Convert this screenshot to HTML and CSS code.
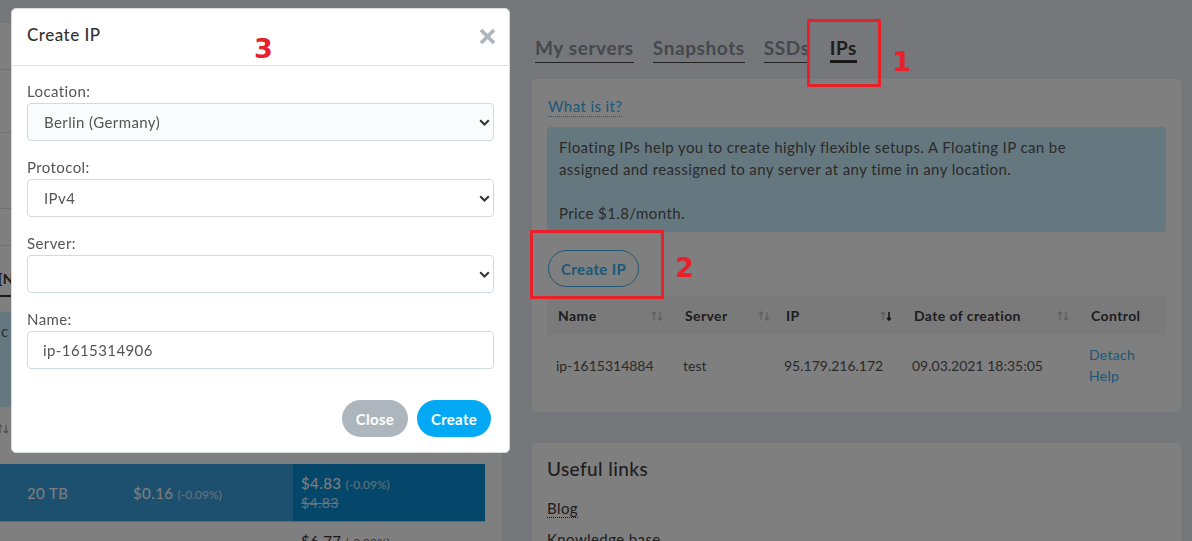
FILE: index.html
```html
<!DOCTYPE html>
<html lang="en">
<head>
<meta charset="utf-8">
<title>Create IP</title>
<link rel="stylesheet" href="styles.css">
</head>
<body>
<div class="page">
  <aside class="left-card">
    <div class="lrow lrow-a"></div>
    <div class="lrow lrow-b"></div>
    <div class="lrow lrow-c"></div>
    <div class="lrow lrow-d"></div>
    <div class="lrow lhead"><span class="lhead-txt">[NVMe]</span></div>
    <div class="linfo">c c</div>
    <div class="lsort"><span class="sort"><svg width="12" height="10" viewBox="0 0 12 10"><path d="M3 9V1M1 3l2-2 2 2" fill="none" stroke="#9aa0a6" stroke-width="1.2"/><path d="M9 1v8M7 7l2 2 2-2" fill="none" stroke="#9aa0a6" stroke-width="1.2"/></svg></span></div>
    <div class="lbluerow">
      <div class="lcell c1">20 TB</div>
      <div class="lcell c2"><div>$0.16 <small>(-0.09%)</small></div></div>
      <div class="lcell c3"><div>$4.83 <small>(-0.09%)</small></div><s>$4.83</s></div>
    </div>
    <div class="lwhiterow">
      <div class="lcell c1"></div>
      <div class="lcell c2"></div>
      <div class="lcell c3"><div>$6.77 <small>(-0.09%)</small></div></div>
    </div>
  </aside>

  <main class="right">
    <nav class="tabs">
      <a class="tab">My servers</a>
      <a class="tab">Snapshots</a>
      <a class="tab">SSDs</a>
      <a class="tab active">IPs</a>
    </nav>

    <section class="card ips">
      <a class="whatis">What is it?</a>
      <div class="info">
        Floating IPs help you to create highly flexible setups. A Floating IP can be<br>
        assigned and reassigned to any server at any time in any location.<br><br>
        Price $1.8/month.
      </div>
      <button class="btn-outline">Create IP</button>
      <table class="iptable">
        <thead>
          <tr>
            <th class="w-name">Name<span class="sort"><svg width="12" height="10" viewBox="0 0 12 10"><path d="M3 9V1M1 3l2-2 2 2" fill="none" stroke="#b9bcc2" stroke-width="1.3"/><path d="M9 1v8M7 7l2 2 2-2" fill="none" stroke="#b9bcc2" stroke-width="1.3"/></svg></span></th>
            <th class="w-server">Server<span class="sort"><svg width="12" height="10" viewBox="0 0 12 10"><path d="M3 9V1M1 3l2-2 2 2" fill="none" stroke="#b9bcc2" stroke-width="1.3"/><path d="M9 1v8M7 7l2 2 2-2" fill="none" stroke="#b9bcc2" stroke-width="1.3"/></svg></span></th>
            <th class="w-ip">IP<span class="sort"><svg width="12" height="10" viewBox="0 0 12 10"><path d="M3 9V1M1 3l2-2 2 2" fill="none" stroke="#b9bcc2" stroke-width="1.3"/><path d="M9 1v8M7 7l2 2 2-2" fill="none" stroke="#222" stroke-width="1.5"/></svg></span></th>
            <th class="w-date">Date of creation<span class="sort"><svg width="12" height="10" viewBox="0 0 12 10"><path d="M3 9V1M1 3l2-2 2 2" fill="none" stroke="#b9bcc2" stroke-width="1.3"/><path d="M9 1v8M7 7l2 2 2-2" fill="none" stroke="#b9bcc2" stroke-width="1.3"/></svg></span></th>
            <th class="w-ctrl">Control</th>
          </tr>
        </thead>
        <tbody>
          <tr>
            <td>ip-1615314884</td>
            <td>test</td>
            <td>95.179.216.172</td>
            <td>09.03.2021 18:35:05</td>
            <td class="ctrl"><a>Detach</a><a>Help</a></td>
          </tr>
        </tbody>
      </table>
    </section>

    <section class="card links">
      <h3>Useful links</h3>
      <a class="ulink">Blog</a>
      <a class="ulink">Knowledge base</a>
    </section>
  </main>
</div>

<div class="backdrop"></div>

<div class="modal">
  <header class="modal-head">
    <h2>Create IP</h2>
    <button class="modal-close" aria-label="Close"><svg width="17" height="17" viewBox="0 0 17 17"><path d="M2 2l13 13M15 2L2 15" stroke="#adb5bd" stroke-width="3.8" stroke-linecap="butt"/></svg></button>
  </header>
  <div class="modal-body">
    <div class="field">
      <label>Location:</label>
      <div class="select-wrap">
        <select class="control shaded"><option>Berlin (Germany)</option></select>
        <svg class="chev" width="11" height="7" viewBox="0 0 11 7"><path d="M1.2 1.2l4.3 4.3 4.3-4.3" fill="none" stroke="#333" stroke-width="2"/></svg>
      </div>
    </div>
    <div class="field">
      <label>Protocol:</label>
      <div class="select-wrap">
        <select class="control"><option>IPv4</option></select>
        <svg class="chev" width="11" height="7" viewBox="0 0 11 7"><path d="M1.2 1.2l4.3 4.3 4.3-4.3" fill="none" stroke="#333" stroke-width="2"/></svg>
      </div>
    </div>
    <div class="field">
      <label>Server:</label>
      <div class="select-wrap">
        <select class="control"><option></option></select>
        <svg class="chev" width="11" height="7" viewBox="0 0 11 7"><path d="M1.2 1.2l4.3 4.3 4.3-4.3" fill="none" stroke="#333" stroke-width="2"/></svg>
      </div>
    </div>
    <div class="field">
      <label>Name:</label>
      <input class="control input" type="text" value="ip-1615314906">
    </div>
  </div>
  <footer class="modal-foot">
    <button class="btn btn-grey">Close</button>
    <button class="btn btn-blue">Create</button>
  </footer>
</div>

<div class="mark mark-box box1"></div>
<div class="mark mark-num num1">1</div>
<div class="mark mark-box box2"></div>
<div class="mark mark-num num2">2</div>
<div class="mark mark-num num3">3</div>
</body>
</html>
```

FILE: styles.css
```css
* { box-sizing: border-box; }
html, body { margin: 0; padding: 0; }
body {
  width: 1192px;
  height: 541px;
  overflow: hidden;
  background: #eceef6;
  font-family: Lato, "Noto Sans", sans-serif;
  letter-spacing: 0.4px;
  color: #555;
  position: relative;
}
a { cursor: pointer; }

.page {
  display: grid;
  grid-template-columns: 502px 649px;
  column-gap: 30px;
  height: 541px;
}

/* ---------- left background card ---------- */
.left-card {
  margin-top: 23px;
  background: #fff;
  display: flex;
  flex-direction: column;
  padding-right: 17px;
}
.lrow { border-bottom: 1px solid #dfe3e8; }
.lrow-a { height: 47px; }
.lrow-b { height: 63px; }
.lrow-c { height: 76px; }
.lrow-d { height: 37px; }
.lhead {
  height: 51px;
  border-bottom: 2px solid #333;
  display: flex;
  align-items: center;
  padding-top: 16px;
  margin-right: -17px;
}
.lhead-txt { font-weight: 700; font-size: 14px; color: #333; margin-left: -2px; }
.linfo {
  margin-top: 15px;
  height: 95px;
  background: #ccf0fe;
  font-size: 15px;
  color: #555;
  padding: 10px 0 0 1px;
  word-spacing: 14px;
  margin-right: -17px;
}
.lsort { height: 57px; display: flex; align-items: center; padding-bottom: 14px; }
.lsort .sort { margin-left: -3px; display: flex; }
.lbluerow {
  height: 57px;
  display: flex;
  background: #3a9fdf;
  color: #fff;
  font-size: 15px;
}
.lbluerow small, .lwhiterow small { font-size: 12px; opacity: .75; letter-spacing: 0; }
.lcell { display: flex; flex-direction: column; justify-content: center; }
.lcell.c1 { width: 133px; padding-left: 27px; }
.lcell.c2 { width: 160px; }
.lcell.c3 { flex: 1; padding-left: 8px; }
.lbluerow .c3 { background: #0a8ed4; }
.lbluerow s { font-size: 14px; margin-top: 2px; opacity: .8; }
.lwhiterow { display: flex; border-top: 1px solid #ccc; height: 40px; color: #333; font-size: 15px; }
.lwhiterow .c3 { justify-content: flex-start; padding-top: 10px; }

/* ---------- right column ---------- */
.right { display: flex; flex-direction: column; }
.tabs {
  display: flex;
  gap: 19px;
  padding: 36px 0 0 3px;
}
.tab {
  font-size: 19px;
  font-weight: 700;
  letter-spacing: 0.6px;
  color: #8a9098;
  line-height: 24px;
  padding-bottom: 2px;
  border-bottom: 1px solid #444;
}
.tab.active {
  color: #3c3c3c;
  border-bottom: 3px solid #333;
  padding-bottom: 0;
  margin-left: 1px;
}
.card {
  background: #fff;
  border-radius: 4px;
  padding: 15px 15px;
}
.ips { margin-top: 16px; height: 333px; display: flex; flex-direction: column; align-items: flex-start; }
.whatis {
  font-size: 15px;
  color: #38b0f0;
  border-bottom: 1px dotted #38b0f0;
  line-height: 19px;
  margin-top: 3px;
  margin-left: 1px;
}
.info {
  margin-top: 10px;
  width: 100%;
  background: #ccf0fe;
  border-radius: 4px;
  padding: 9px 12px 8px;
  font-size: 15px;
  line-height: 22px;
  color: #555;
}
.btn-outline {
  margin-top: 18px;
  margin-left: 1px;
  height: 37px;
  padding: 0 12px;
  border: 1px solid #38b0f0;
  border-radius: 19px;
  background: transparent;
  color: #38b0f0;
  font-family: inherit;
  letter-spacing: 0.4px;
  font-size: 15px;
  font-weight: 700;
}
.iptable {
  margin-top: 9px;
  width: 100%;
  border-collapse: collapse;
  table-layout: fixed;
  font-size: 14px;
}
.iptable th {
  background: #f4f5f7;
  height: 39px;
  text-align: left;
  font-weight: 700;
  color: #3c3c3c;
  padding: 0 11px;
  position: relative;
}
.iptable th .sort { position: absolute; right: 11px; top: 15px; display: flex; }
.w-name { width: 127px; }
.w-server { width: 101px; }
.w-ip { width: 128px; }
.w-date { width: 177px; }
.w-ctrl { width: 86px; }
.iptable th.w-server .sort { right: 5px; }
.iptable td {
  padding: 8px 9px;
  height: 60px;
  color: #555;
  letter-spacing: 0;
}
.iptable td.ctrl { display: flex; flex-direction: column; padding-top: 9px; line-height: 21px; letter-spacing: 0.3px; }
.ctrl a { color: #38b0f0; }

.links { margin-top: 31px; flex: 1; display: flex; flex-direction: column; align-items: flex-start; padding-top: 14px; }
.links h3 { margin: 0; font-size: 19px; font-weight: 500; color: #3c3c3c; line-height: 24px; }
.ulink {
  font-size: 15px;
  color: #3c3c3c;
  border-bottom: 1px dotted #333;
  line-height: 18px;
  margin-top: 18px;
}
.ulink + .ulink { margin-top: 12px; }

/* ---------- modal ---------- */
.backdrop {
  position: fixed;
  inset: 0;
  background: rgba(0, 0, 0, 0.5);
  z-index: 10;
}
.modal {
  position: absolute;
  left: 11px;
  top: 8px;
  width: 499px;
  height: 445px;
  background: #fff;
  border-radius: 5px;
  border: 1px solid #d6dbe0;
  z-index: 20;
  display: flex;
  flex-direction: column;
}
.modal-head {
  height: 57px;
  border-bottom: 1px solid #dde3ea;
  display: flex;
  align-items: center;
  justify-content: space-between;
  padding: 0 13px 6px 15px;
}
.modal-head h2 {
  margin: 0;
  font-size: 17px;
  font-weight: 500;
  letter-spacing: 0.5px;
  color: #333;
}
.modal-close {
  border: 0;
  background: none;
  padding: 0;
  display: flex;
  margin-top: 4px;
}
.modal-body { padding: 15px 15px 0; }
.field { display: flex; flex-direction: column; margin-bottom: 16px; }
.field label {
  font-size: 15px;
  line-height: 20px;
  color: #555;
  margin-bottom: 2px;
}
.select-wrap { position: relative; }
.control {
  width: 100%;
  height: 38px;
  border: 1px solid #cfdbe4;
  border-radius: 4px;
  background: #fff;
  font-family: inherit;
  letter-spacing: 0.4px;
  font-size: 15px;
  color: #555;
  padding: 0 16px;
  appearance: none;
  -webkit-appearance: none;
  outline: none;
}
.control.shaded { background: #fafbfc; }
.input { padding-left: 15px; }
.chev { position: absolute; right: 4px; top: 16px; pointer-events: none; }
.modal-foot {
  margin-top: auto;
  display: flex;
  justify-content: flex-end;
  gap: 9px;
  padding: 0 18px 15px;
}
.btn {
  height: 37px;
  border: 0;
  border-radius: 19px;
  color: #fff;
  font-family: inherit;
  letter-spacing: 0.3px;
  font-size: 15px;
  font-weight: 700;
}
.btn-grey { background: #adb5bd; width: 66px; }
.btn-blue { background: #03a9f4; width: 74px; }

/* ---------- annotations ---------- */
.mark { position: absolute; z-index: 30; }
.mark-box { border: 3px solid #e8202a; }
.box1 { left: 807px; top: 19px; width: 74px; height: 68px; }
.box2 { left: 530px; top: 230px; width: 134px; height: 69px; }
.mark-num {
  color: #e8202a;
  font-family: "DejaVu Sans", sans-serif;
  font-weight: 700;
  font-size: 27px;
  line-height: 1;
}
.num1 { left: 892px; top: 48px; }
.num2 { left: 675px; top: 254px; }
.num3 { left: 254px; top: 35px; }
```
